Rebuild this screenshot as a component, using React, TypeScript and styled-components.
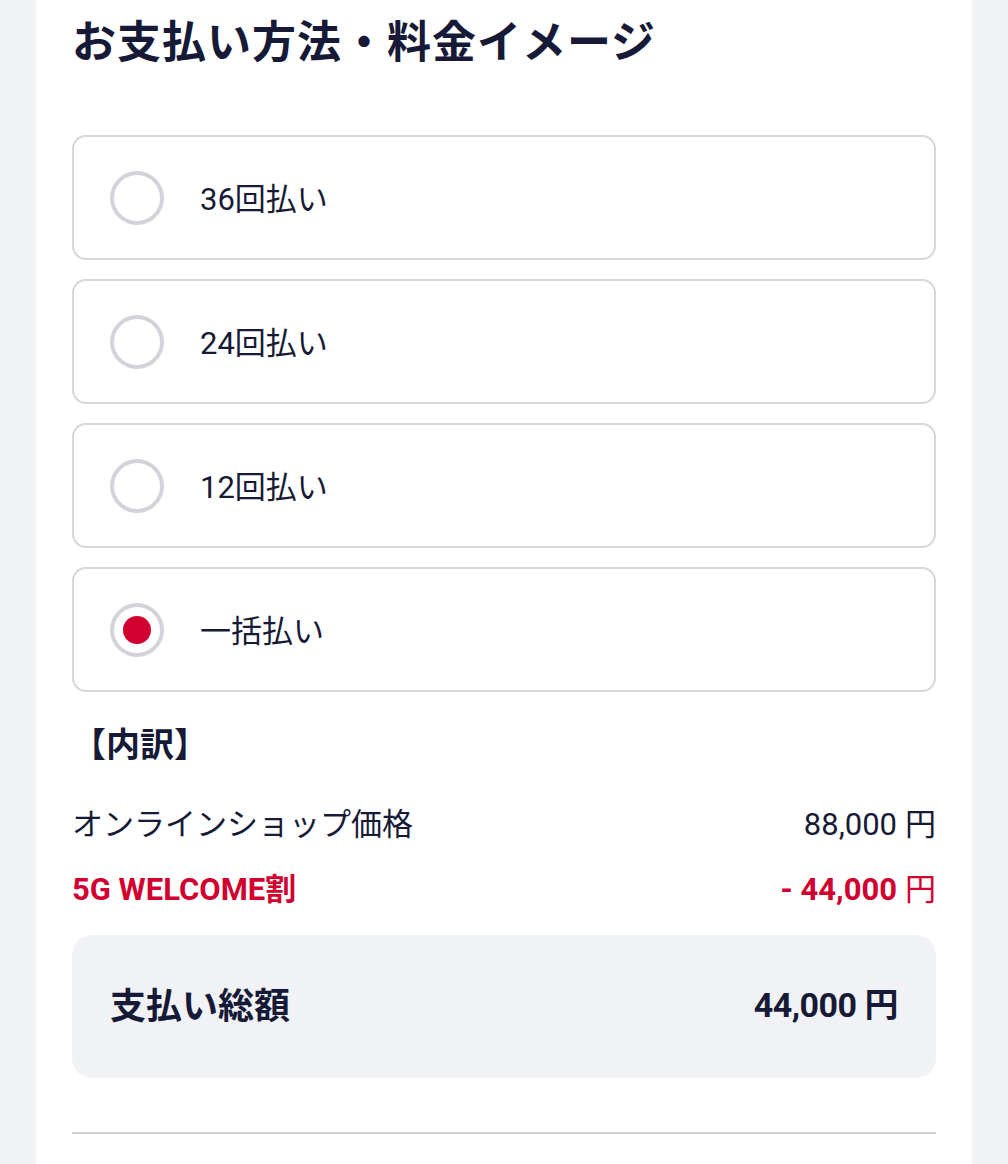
import styled, { createGlobalStyle } from "styled-components";

const GlobalStyle = createGlobalStyle`
  html, body {
    margin: 0;
    padding: 0;
    background: #f1f2f5;
  }
  body {
    font-family: Roboto, "Noto Sans CJK JP", sans-serif;
    color: #161a36;
  }
`;

const Page = styled.div`
  display: flex;
  justify-content: center;
  padding: 0 36px;
  min-height: 1164px;
  box-sizing: border-box;
`;

const Card = styled.section`
  flex: 1;
  background: #fff;
  padding: 10px 36px 30px;
  display: flex;
  flex-direction: column;
`;

const Title = styled.h2`
  margin: 0 0 59px;
  font-size: 44px;
  line-height: 66px;
  font-weight: 700;
  letter-spacing: 1px;
`;

const Options = styled.div`
  display: flex;
  flex-direction: column;
  gap: 19px;
`;

const Option = styled.label`
  display: flex;
  align-items: center;
  gap: 36px;
  height: 125px;
  box-sizing: border-box;
  padding: 0 36px 3px;
  border: 2px solid #d6d7dc;
  border-radius: 14px;
  font-size: 31px;
  cursor: pointer;
`;

const Radio = styled.span<{ $checked?: boolean }>`
  width: 54px;
  height: 54px;
  margin-top: 3px;
  box-sizing: border-box;
  border-radius: 50%;
  border: 4px solid #d2d4d9;
  display: flex;
  align-items: center;
  justify-content: center;

  &::after {
    content: "";
    width: 28px;
    height: 28px;
    border-radius: 50%;
    background: ${(p) => (p.$checked ? "#d1002f" : "transparent")};
  }
`;

const Heading = styled.h3`
  margin: 29px 0 32px;
  font-size: 34px;
  line-height: 48px;
  font-weight: 700;
`;

const Row = styled.div<{ $accent?: boolean }>`
  display: flex;
  justify-content: space-between;
  align-items: center;
  font-size: 31px;
  line-height: 48px;
  color: ${(p) => (p.$accent ? "#d1002f" : "#161a36")};
  font-weight: ${(p) => (p.$accent ? 700 : 400)};
  & + & {
    margin-top: 17px;
  }
`;

const Yen = styled.span`
  font-weight: 400;
  margin-left: 8px;
`;

const Total = styled.div`
  margin-top: 21px;
  height: 143px;
  box-sizing: border-box;
  padding: 0 38px 8px;
  background: #f1f2f5;
  border-radius: 20px;
  display: flex;
  justify-content: space-between;
  align-items: center;
  font-size: 36px;
  font-weight: 700;
`;

const Amount = styled.span`
  font-size: 34px;
  letter-spacing: -0.5px;
`;

const Divider = styled.hr`
  margin: 54px 0 0;
  border: none;
  border-top: 2px solid #cfd0d4;
`;

const plans = ["36回払い", "24回払い", "12回払い", "一括払い"];

export default function App() {
  const selected = "一括払い";
  return (
    <>
      <GlobalStyle />
      <Page>
        <Card>
          <Title>お支払い方法・料金イメージ</Title>
          <Options>
            {plans.map((p) => (
              <Option key={p}>
                <Radio $checked={p === selected} />
                {p}
              </Option>
            ))}
          </Options>
          <Heading>【内訳】</Heading>
          <Row>
            <span>オンラインショップ価格</span>
            <span>
              88,000<Yen>円</Yen>
            </span>
          </Row>
          <Row $accent>
            <span>5G WELCOME割</span>
            <span>
              - 44,000<Yen>円</Yen>
            </span>
          </Row>
          <Total>
            <span>支払い総額</span>
            <Amount>44,000 円</Amount>
          </Total>
          <Divider />
        </Card>
      </Page>
    </>
  );
}
